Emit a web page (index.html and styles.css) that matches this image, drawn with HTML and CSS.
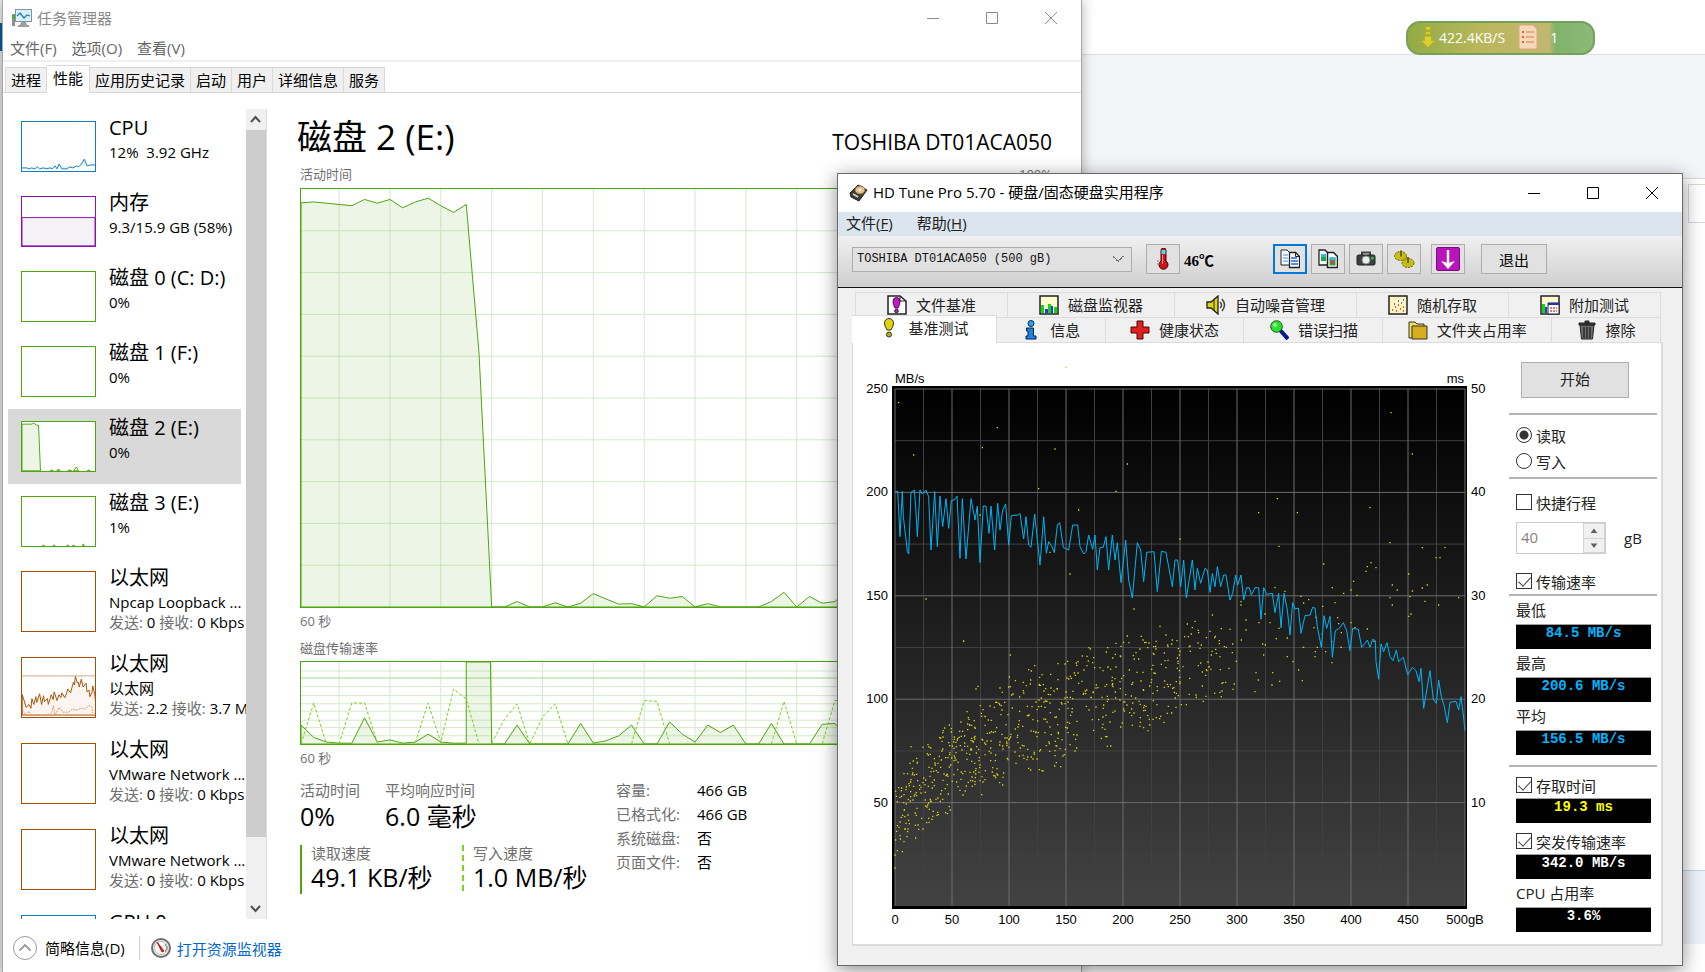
FILE: index.html
```html
<!DOCTYPE html>
<html lang="zh-CN">

<head>
  <meta charset="UTF-8">
  <meta name="viewport" content="width=device-width, initial-scale=1.0">
  <title>任务管理器</title>
  <link rel="stylesheet" href="styles.css">
</head>

<body>

  <div class="backdrop">
    <div class="backdrop-top"></div>
    <div class="backdrop-band"></div>
    <div class="backdrop-body"></div>
    <div class="backdrop-status"></div>
    <div class="backdrop-end"></div>
  </div>
  <div class="backdrop-edge"></div>
  <div class="backdrop-box"></div>

  <!-- network speed widget -->
  <div class="net-widget">
    <svg width="14" height="26" viewBox="0 0 16 26">
      <path d="M5 1h6v4H5zM5 7h6v3H5zM4 12h8v5h4l-8 8-8-8h4z" fill="#dcd02c" stroke="#a8a41c" stroke-width=".6" />
    </svg>
    <span class="net-speed">422.4KB/S</span>
    <svg width="22" height="26" viewBox="0 0 22 26">
      <path d="M2 1h14l4 4v20H2z" fill="#f4d8b8" stroke="#d9a67e" />
      <path d="M5 8h2M5 13h2M5 18h2" stroke="#e0603c" stroke-width="2" />
      <path d="M9 8h8M9 13h8M9 18h8" stroke="#e29a78" stroke-width="1.5" />
    </svg>
    <span class="net-count">1</span>
  </div>

  <!-- task manager -->
  <section class="window taskmgr">
    <header class="tm-title">
      <svg width="20" height="18" viewBox="0 0 20 18">
        <path d="M0 5h3v12H0z" fill="#8b8f92" />
        <path d="M0 6h3v4H0z" fill="#47b13b" />
        <rect x="3.5" y=".5" width="16" height="12" fill="#d8f0fb" stroke="#8a9297" />
        <path d="M5 7l3-3 4 5 3-3 3 1" fill="none" stroke="#1c7fb6" stroke-width="1.3" />
        <path d="M9 13h5l1 3h2v2H6v-2h2z" fill="#9ba0a3" />
      </svg>
      <h1>任务管理器</h1>
      <div class="win-buttons">
        <button type="button" aria-label="最小化"><svg width="12" height="12" viewBox="0 0 12 12"><path d="M0 6.500h12" /></svg></button>
        <button type="button" aria-label="最大化"><svg width="12" height="12" viewBox="0 0 12 12"><path d="M.5.5h11v11H.5z" /></svg></button>
        <button type="button" aria-label="关闭"><svg width="12" height="12" viewBox="0 0 12 12"><path d="M0 0l12 12M12 0L0 12" /></svg></button>
      </div>
    </header>
    <nav class="tm-menu">
      <button type="button">文件(F)</button>
      <button type="button">选项(O)</button>
      <button type="button">查看(V)</button>
    </nav>
    <div class="tm-tabs" role="tablist">
      <button type="button" role="tab">进程</button>
      <button type="button" role="tab" class="active">性能</button>
      <button type="button" role="tab">应用历史记录</button>
      <button type="button" role="tab">启动</button>
      <button type="button" role="tab">用户</button>
      <button type="button" role="tab">详细信息</button>
      <button type="button" role="tab">服务</button>
    </div>

    <div class="tm-body">
      <aside class="tm-side">
        <ul class="device-list">
          <li>
            <svg class="thumb cpu" viewBox="0 0 75 50"><path d="M0 47h5l2 1 3-1 3 1 3-2 2 2 4-1 3 1 4-1 2 1 3-3 2 3 2-5 3 5h5l3-2 3 1 4-2 2 1 3-3 3-5 3 7 3-1h5" /></svg>
            <div class="device">
              <h2>CPU</h2>
              <p>12%&nbsp; 3.92 GHz</p>
            </div>
          </li>
          <li>
            <svg class="thumb mem" viewBox="0 0 75 50"><path d="M0 21h75v29H0z" /></svg>
            <div class="device">
              <h2>内存</h2>
              <p>9.3/15.9 GB (58%)</p>
            </div>
          </li>
          <li>
            <svg class="thumb disk" viewBox="0 0 75 50"></svg>
            <div class="device">
              <h2>磁盘 0 (C: D:)</h2>
              <p>0%</p>
            </div>
          </li>
          <li>
            <svg class="thumb disk" viewBox="0 0 75 50"></svg>
            <div class="device">
              <h2>磁盘 1 (F:)</h2>
              <p>0%</p>
            </div>
          </li>
          <li class="selected">
            <svg class="thumb disk" viewBox="0 0 75 50"><path d="M0 2h10l2-1 3 2 2 0 2 47H0zM29 50l2-1 1 1zM36 50v-1h3v1zM47 50l2-1 2 1zM53 50l3-4 2 4zM67 50l2-1 1 1z" /></svg>
            <div class="device">
              <h2>磁盘 2 (E:)</h2>
              <p>0%</p>
            </div>
          </li>
          <li>
            <svg class="thumb disk" viewBox="0 0 75 50"><path d="M21 50l1-1 1 1zM32 50l1-1 1 1zM46 50l1-1 1 1zM52 50l1-1 1 1zM62 50l1-2 1 2z" /></svg>
            <div class="device">
              <h2>磁盘 3 (E:)</h2>
              <p>1%</p>
            </div>
          </li>
          <li class="net">
            <svg class="thumb eth" viewBox="0 0 75 61"></svg>
            <div class="device">
              <h2>以太网</h2>
              <p>Npcap Loopback ...</p>
              <p><span>发送:</span> 0 <span>接收:</span> 0 Kbps</p>
            </div>
          </li>
          <li class="net">
            <svg class="thumb eth" viewBox="0 0 75 61">
              <path d="M0 38l2 6 2 7 3-3 2 4 1-10 2 6 2-8 1 6 3-9 2 11 2-9 1 6 3-3 1 6 3-10 2 5 1-8 3 9 2-6 2 3 1-5 3 5 2-5 1-4 3 4 1-4 2-7 1 3 1-9 2 7 1-1 1 5 2-8 2 8 3-4 1 9 2-2 1 7 2-4 1-7 2 9 1 8v13H0z" />
              <path class="dash" d="M0 54l4 5 3-4 3 5 4-1h5l4 1 4-2 3 2 2-11 2 10 4-8 4 5h6l4-3 4 1 5-2 4 1 4-4 3 2 1 6" />
              <path class="cap" d="M0 18.500h75" />
            </svg>
            <div class="device">
              <h2>以太网</h2>
              <p>以太网</p>
              <p><span>发送:</span> 2.2 <span>接收:</span> 3.7 Mbps</p>
            </div>
          </li>
          <li class="net">
            <svg class="thumb eth" viewBox="0 0 75 61"></svg>
            <div class="device">
              <h2>以太网</h2>
              <p>VMware Network ...</p>
              <p><span>发送:</span> 0 <span>接收:</span> 0 Kbps</p>
            </div>
          </li>
          <li class="net">
            <svg class="thumb eth" viewBox="0 0 75 61"></svg>
            <div class="device">
              <h2>以太网</h2>
              <p>VMware Network ...</p>
              <p><span>发送:</span> 0 <span>接收:</span> 0 Kbps</p>
            </div>
          </li>
          <li>
            <svg class="thumb cpu" viewBox="0 0 75 50"></svg>
            <div class="device">
              <h2>GPU 0</h2>
            </div>
          </li>
        </ul>
        <div class="scrollbar">
          <svg width="19" height="21" viewBox="0 0 19 21"><path d="M5 13l4.500-5 4.500 5" /></svg>
          <div class="scroll-thumb"></div>
          <svg width="19" height="21" viewBox="0 0 19 21"><path d="M5 8l4.500 5 4.500-5" /></svg>
        </div>
      </aside>

      <main class="tm-main">
        <div class="disk-head">
          <h2>磁盘 2 (E:)</h2>
          <span>TOSHIBA DT01ACA050</span>
        </div>
        <div class="caption"><span>活动时间</span><span>100%</span></div>
        <!-- x runs over 60 samples, y over 0-100% from the top -->
        <svg class="graph graph-active" viewBox="0 0 59 100" preserveAspectRatio="none">
          <path class="grid" d="M3 0v100M7 0v100M11 0v100M15 0v100M19 0v100M23 0v100M27 0v100M31 0v100M35 0v100M39 0v100M43 0v100M47 0v100M51 0v100M55 0v100M0 10h59M0 20h59M0 30h59M0 40h59M0 50h59M0 60h59M0 70h59M0 80h59M0 90h59" />
          <polygon class="area" points="0,100 0,3.300 1,3.100 4,4 5,2.500 6,3.400 7,2.500 8,4.500 9,3.100 10,2.200 11,4 12,5.600 13,3.700 14,39 15,100 16,100 17,98.700 18,100 19,100 20,99 21,100 22,99.100 23,96.800 24,98.100 25,99.300 26,99.200 27,100 28,97.300 29,97.900 30,97.500 31,100 32,99.200 33,100 36,100 37,98.700 38,96.500 39,100 40,97.500 41,99.100 42,98.700 43,96 44,100 59,100" />
        </svg>
        <div class="caption below"><span>60 秒</span></div>
        <div class="caption second"><span>磁盘传输速率</span></div>
        <svg class="graph graph-rate" viewBox="0 0 59 100" preserveAspectRatio="none">
          <path class="grid" d="M3 0v100M7 0v100M11 0v100M15 0v100M19 0v100M23 0v100M27 0v100M31 0v100M35 0v100M39 0v100M43 0v100M47 0v100M51 0v100M55 0v100M0 11h59M0 30h59M0 41h59M0 51h59M0 60h59M0 71h59M0 80h59M0 90h59" />
          <path class="limit" d="M0 19.500h59" />
          <polygon class="area" points="0,100 0,77 1,92 2,97.600 3,99 4,99 5,68 6,97.600 7,95 8,99 9,97.600 10,88 11,97.600 12,99 13,99 13,0 14.900,0 15,100 16,100 17,77 18,100 21,100 22,75 23,99 24,96 25,90 26,77 27,100 28,100 29,73 30,88 31,97.600 32,77 33,86 34,77 35,100 36,100 37,75 38,100 40,100 41,76 42,75 43,90 44,100 59,100" />
          <path class="write" d="M0 100L1 50 2 100M3 100L4 50 5 50 6 98M9 98L10 50 11 98 12 33 13 45 14 100M15 99L16 70 17 51 18 100 19 67 20 51 21 100M26 100L27 47 28 48 29 100M37 100L38 48 39 100M41 100L42 47 43 47" />
        </svg>
        <div class="caption below"><span>60 秒</span></div>

        <div class="stats">
          <div class="stats-live">
            <div class="stats-row">
              <dl><dt>活动时间</dt><dd>0%</dd></dl>
              <dl><dt>平均响应时间</dt><dd>6.0 毫秒</dd></dl>
            </div>
            <div class="stats-row">
              <dl class="read"><dt>读取速度</dt><dd>49.1 KB/秒</dd></dl>
              <dl class="write"><dt>写入速度</dt><dd>1.0 MB/秒</dd></dl>
            </div>
          </div>
          <table class="stats-info">
            <tr><th>容量:</th><td>466 GB</td></tr>
            <tr><th>已格式化:</th><td>466 GB</td></tr>
            <tr><th>系统磁盘:</th><td>否</td></tr>
            <tr><th>页面文件:</th><td>否</td></tr>
          </table>
        </div>
      </main>
    </div>

    <footer class="tm-footer">
      <button type="button">
        <svg width="24" height="24" viewBox="0 0 24 24"><circle cx="12" cy="12" r="11.500" fill="none" stroke="#999" /><path d="M6.500 14.500L12 9l5.500 5.500" fill="none" stroke="#999" stroke-width="1.800" /></svg>
        简略信息(D)
      </button>
      <a href="#">
        <svg width="20" height="20" viewBox="0 0 20 20">
          <circle cx="10" cy="10" r="9" fill="#f2f2f2" stroke="#6d6d6d" stroke-width="2" />
          <circle cx="10" cy="10" r="6.500" fill="#fff" stroke="#b5b5b5" />
          <path d="M6 4l7 9-2 1z" fill="#d5281f" stroke="#b01712" />
          <path d="M14 6l2 4-2 4" fill="none" stroke="#777" />
        </svg>
        打开资源监视器
      </a>
    </footer>
  </section>

  <!-- HD Tune -->
  <section class="window hdtune">
    <header class="hd-title">
      <svg width="19" height="18" viewBox="0 0 19 18">
        <path d="M1 9L9 1l9 5-8 11-8-4z" fill="#3d3a38" stroke="#222" />
        <ellipse cx="11" cy="6" rx="5" ry="4" fill="#e8c28c" stroke="#8d6a3e" />
        <circle cx="11" cy="6" r="1.300" fill="#fff" />
        <path d="M4 10l5 3" stroke="#d8d0c8" stroke-width="2" />
      </svg>
      <h1>HD Tune Pro 5.70 - 硬盘/固态硬盘实用程序</h1>
      <div class="win-buttons">
        <button type="button" aria-label="最小化"><svg width="12" height="12" viewBox="0 0 12 12"><path d="M0 6.500h12" /></svg></button>
        <button type="button" aria-label="最大化"><svg width="12" height="12" viewBox="0 0 12 12"><path d="M.5.5h11v11H.5z" /></svg></button>
        <button type="button" aria-label="关闭"><svg width="12" height="12" viewBox="0 0 12 12"><path d="M0 0l12 12M12 0L0 12" /></svg></button>
      </div>
    </header>
    <nav class="hd-menu">
      <button type="button">文件(<u>F</u>)</button>
      <button type="button">帮助(<u>H</u>)</button>
    </nav>
    <div class="hd-toolbar">
      <select class="drive" aria-label="硬盘">
        <option>TOSHIBA DT01ACA050 (500 gB)</option>
      </select>
      <button type="button" class="tool temp" aria-label="温度">
        <svg width="20" height="22" viewBox="0 0 20 22">
          <path d="M8 2.500a2.500 2.500 0 0 1 5 0V13a4.500 4.500 0 1 1-5 0z" fill="#d8101a" stroke="#3a0505" />
          <path d="M8.500 2h4v4h-4z" fill="#4fd8e8" />
          <path d="M9.500 7v9" stroke="#ff8d8d" />
          <path d="M4 16h3M4 13h2" stroke="#777" />
        </svg>
      </button>
      <strong class="temp-value">46℃</strong>
      <button type="button" class="tool focused" aria-label="复制文本">
        <svg width="20" height="20" viewBox="0 0 20 20">
          <path d="M1 1h6l3 3v12H1z" fill="#fff" stroke="#222" />
          <path d="M3 6h5M3 9h5M3 12h5" stroke="#3a8fe8" />
          <path d="M9.500 3.500h6l4 4v11h-10z" fill="#fff" stroke="#222" stroke-width="1.300" />
          <path d="M15.500 3.500v4h4" fill="none" stroke="#222" />
          <path d="M11 9h6M11 12h7M11 15h7" stroke="#2468d8" stroke-width="1.300" />
        </svg>
      </button>
      <button type="button" class="tool" aria-label="复制图像">
        <svg width="20" height="20" viewBox="0 0 20 20">
          <path d="M1 1h6l3 3v12H1z" fill="#fff" stroke="#222" stroke-width="1.300" />
          <path d="M3 5h5v7H3z" fill="#1fa83c" />
          <path d="M3 5h5v3H3z" fill="#35b5e8" />
          <path d="M9.500 3.500h6l4 4v11h-10z" fill="#fff" stroke="#222" stroke-width="1.500" />
          <path d="M11.500 8.500h6v8h-6z" fill="#1fa83c" />
          <path d="M11.500 8.500h6v3h-6z" fill="#35b5e8" />
          <circle cx="14.500" cy="13" r="2" fill="#d6442c" />
        </svg>
      </button>
      <button type="button" class="tool" aria-label="截图">
        <svg width="20" height="20" viewBox="0 0 20 20">
          <path d="M6 6V3.500h8V6" fill="none" stroke="#444" stroke-width="2" />
          <rect x="1" y="6" width="18" height="10" rx="1.500" fill="#3c3f41" stroke="#222" />
          <circle cx="10" cy="11" r="4" fill="#e9eef0" stroke="#888" />
          <circle cx="16.500" cy="9" r="1.500" fill="#25c93a" />
        </svg>
      </button>
      <button type="button" class="tool" aria-label="选项">
        <svg width="22" height="20" viewBox="0 0 22 20">
          <ellipse cx="7.500" cy="7" rx="6" ry="4.500" fill="#c9bd14" stroke="#6d660b" stroke-dasharray="2 1" />
          <ellipse cx="15" cy="14" rx="6" ry="4.500" fill="#c9bd14" stroke="#6d660b" stroke-dasharray="2 1" />
          <path d="M8 1.500v6M15 8v6" stroke="#6d660b" stroke-width="2" />
        </svg>
      </button>
      <button type="button" class="tool save" aria-label="保存">
        <svg width="24" height="24" viewBox="0 0 24 24">
          <rect x=".5" y=".5" width="23" height="23" rx="1.500" fill="#b914b9" stroke="#7c0a80" />
          <path d="M12 3v14" stroke="#fff" stroke-width="2.500" />
          <path d="M5 14l7 2 7-2-7 8z" fill="#fff" />
        </svg>
      </button>
      <button type="button" class="exit">退出</button>
    </div>

    <div class="hd-body">
      <div class="hd-tabs back" role="tablist">
        <button type="button" role="tab">
          <svg viewBox="0 0 20 20"><path d="M1 1h12l6 5v13H1z" fill="#fff" stroke="#222" stroke-width="1.500" /><path d="M13 1v5h6" fill="none" stroke="#222" /><path d="M6 6.500a3.500 4 0 0 1 7 0Q13 9 11 13H8Q6 9 6 6.500z" fill="#c816c8" stroke="#4a064a" /><circle cx="9.500" cy="16" r="1.800" fill="#c816c8" stroke="#222" /></svg>
          文件基准
        </button>
        <button type="button" role="tab">
          <svg viewBox="0 0 20 20"><path d="M1 1h18v18H1z" fill="#fbfbd0" stroke="#222" stroke-width="1.500" /><path d="M2 18v-8h3v8zM9 18v-9h3v9zM15 18v-6h3v6z" fill="#12d612" /><path d="M6 18v-4h3v4zM12 18v-7h2v7z" fill="#2438e0" /></svg>
          磁盘监视器
        </button>
        <button type="button" role="tab">
          <svg viewBox="0 0 20 20"><path d="M1 7h4l7-6v18l-7-6H1z" fill="#ded50f" stroke="#222" stroke-width="1.300" /><path d="M8 5v10" stroke="#222" /><path d="M14 7q3 3 0 6M16 4q5 6 0 12" fill="none" stroke="#444" stroke-width="1.500" /></svg>
          自动噪音管理
        </button>
        <button type="button" role="tab">
          <svg viewBox="0 0 20 20"><path d="M1 1h18v18H1z" fill="#fdf5c0" stroke="#222" stroke-width="1.500" /><path d="M4 15h1M7 12h1M8 16h1M10 10h1M12 14h1M15 12h1M15 16h1" stroke="#e02424" stroke-width="1.500" /><path d="M6 9h1M10 6h1M13 8h1M15 5h1" stroke="#2a3be0" stroke-width="1.500" /></svg>
          随机存取
        </button>
        <button type="button" role="tab">
          <svg viewBox="0 0 20 20"><path d="M1 1h18v18H1z" fill="#fbfbd0" stroke="#222" stroke-width="1.500" /><path d="M2 18V9h3v9z" fill="#12d612" /><path d="M5 18v-6h2v6z" fill="#2438e0" /><path d="M8 8h11v11H8z" fill="#fff" stroke="#222" /><path d="M8 8h11v2H8z" fill="#1c2fd0" /><path d="M10 13h7M10 16h7" stroke="#e04848" stroke-width="1.500" stroke-dasharray="2 1" /></svg>
          附加测试
        </button>
      </div>
      <div class="hd-tabs front" role="tablist">
        <button type="button" role="tab" class="active">
          <svg viewBox="0 0 20 20"><path d="M5.500 5a4.500 4.500 0 0 1 9 0q0 3-2.500 7H8Q5.500 8 5.500 5z" fill="#ded50f" stroke="#333" /><circle cx="10" cy="16.500" r="2.500" fill="#b8ae10" stroke="#333" /></svg>
          基准测试
        </button>
        <button type="button" role="tab">
          <svg viewBox="0 0 20 20"><circle cx="10" cy="3.500" r="3" fill="#1fa8f0" stroke="#0a2a50" /><path d="M5.500 8h7v8H15v3H5v-3h2v-5H5.500z" fill="#1785e8" stroke="#0a2040" /></svg>
          信息
        </button>
        <button type="button" role="tab">
          <svg viewBox="0 0 20 20"><path d="M7 1h6v6h6v6h-6v6H7v-6H1V7h6z" fill="#e01f1f" stroke="#4d0808" /></svg>
          健康状态
        </button>
        <button type="button" role="tab">
          <svg viewBox="0 0 20 20"><path d="M11 10l8 9" stroke="#0a1690" stroke-width="4" /><circle cx="7.500" cy="6.500" r="5.800" fill="#2ee02e" stroke="#145c14" /><circle cx="6" cy="5" r="2" fill="#a4f7a4" /></svg>
          错误扫描
        </button>
        <button type="button" role="tab">
          <svg viewBox="0 0 20 20"><path d="M1 18V2h6l2 2h7v14z" fill="#f0dc5a" stroke="#333" /><path d="M4 6h15v13H4z" fill="#d9ae1c" stroke="#333" /></svg>
          文件夹占用率
        </button>
        <button type="button" role="tab">
          <svg viewBox="0 0 20 20"><path d="M3 5h14l-1.500 14h-11z" fill="#6c6f70" stroke="#222" /><path d="M7 7v11M10 7v11M13 7v11" stroke="#1d1d1d" stroke-width="1.300" /><path d="M2 3h16v2H2zM8 1h4v2H8z" fill="#3b3d3e" stroke="#222" /></svg>
          擦除
        </button>
      </div>

      <div class="hd-panel">
        <div class="bench">
          <div class="units"><span>MB/s</span><span>ms</span></div>
          <div class="axis axis-left"><span>250</span><span>200</span><span>150</span><span>100</span><span>50</span></div>
          <svg class="plot" viewBox="126 78 1725 1569" preserveAspectRatio="none">
            <defs>
              <linearGradient id="plotBg" x1="0" y1="0" x2="0" y2="1">
                <stop offset="0" stop-color="#000" />
                <stop offset="1" stop-color="#424242" />
              </linearGradient>
            </defs>
            <rect x="126" y="78" width="1725" height="1569" fill="#000" />
            <rect x="135" y="87" width="1710" height="1551" fill="url(#plotBg)" />
            <path id="minorGrid" class="minor" />
            <path id="majorGrid" class="major" />
            <path id="accessDots" class="dots" />
            <polyline class="speed" points="135,394 143,394 145,430 150,530 157,394 160,470 167,530 172,575 176,582 183,397 193,390 197,440 202,530 210,390 217,402 228,390 236,410 243,570 254,395 262,560 270,408 278,500 288,416 296,505 304,422 312,420 321,408 330,595 337,416 348,597 363,416 375,480 382,438 390,608 400,438 408,438 417,520 423,438 434,570 443,430 450,510 458,450 467,432 476,555 484,467 505,465 510,460 521,537 528,470 536,555 543,562 554,462 570,615 581,470 589,580 596,545 606,560 613,578 622,495 629,488 640,562 656,570 668,495 683,495 690,560 701,582 708,575 716,525 728,568 735,525 742,630 750,562 760,562 768,530 776,630 787,525 795,600 802,548 813,668 827,540 836,660 847,714 862,548 872,570 881,665 890,577 912,575 922,695 934,574 948,577 967,680 975,600 983,600 992,680 1001,600 1009,714 1027,600 1035,690 1042,625 1052,670 1065,625 1072,630 1080,697 1087,640 1095,680 1102,620 1112,680 1121,645 1128,645 1140,720 1148,700 1157,645 1163,675 1173,645 1181,720 1190,683 1198,683 1204,705 1215,683 1226,683 1233,778 1241,683 1250,703 1267,700 1275,758 1286,700 1293,803 1302,700 1312,750 1320,825 1328,728 1335,747 1345,744 1353,820 1365,767 1380,765 1388,742 1395,744 1402,800 1414,862 1422,767 1430,805 1440,770 1447,892 1456,812 1468,805 1480,788 1490,812 1500,872 1508,805 1525,808 1535,862 1545,850 1552,840 1560,862 1568,838 1576,842 1578,905 1586,958 1593,852 1601,875 1611,848 1620,890 1629,902 1639,870 1646,905 1660,892 1673,945 1687,922 1698,932 1707,965 1713,925 1721,1045 1740,932 1750,1018 1759,1030 1766,960 1774,1010 1783,1040 1792,1088 1800,1027 1818,1024 1826,1050 1833,1010 1840,1065 1845,1112" />
          </svg>
          <div class="axis axis-right"><span>50</span><span>40</span><span>30</span><span>20</span><span>10</span></div>
          <div class="axis-bottom"><span>0</span><span>50</span><span>100</span><span>150</span><span>200</span><span>250</span><span>300</span><span>350</span><span>400</span><span>450</span><span>500gB</span></div>
        </div>

        <form class="controls">
          <button type="button" class="start">开始</button>
          <hr>
          <div class="modes">
            <label><input type="radio" name="mode" checked>读取</label>
            <label><input type="radio" name="mode">写入</label>
          </div>
          <hr>
          <label class="stroke-check"><input type="checkbox">快捷行程</label>
          <div class="stroke-size">
            <span class="spinner">
              <input type="text" value="40" aria-label="快捷行程" disabled>
              <span class="arrows">
                <svg viewBox="0 0 18 12"><path d="M6 8l3-4 3 4z" /></svg>
                <svg viewBox="0 0 18 12"><path d="M6 4l3 4 3-4z" /></svg>
              </span>
            </span>
            gB
          </div>
          <label class="rate-check"><input type="checkbox" checked>传输速率</label>
          <hr>
          <p>最低</p>
          <output>84.5 MB/s</output>
          <p>最高</p>
          <output>200.6 MB/s</output>
          <p>平均</p>
          <output>156.5 MB/s</output>
          <hr class="spaced">
          <label class="result-check"><input type="checkbox" checked>存取时间</label>
          <output class="yellow">19.3 ms</output>
          <label class="result-check"><input type="checkbox" checked>突发传输速率</label>
          <output class="white">342.0 MB/s</output>
          <p>CPU 占用率</p>
          <output class="white">3.6%</output>
        </form>
      </div>
    </div>
  </section>

  <script src="script.js"></script>
</body>

</html>
```

FILE: styles.css
```css
* {
  box-sizing: border-box;
}

body {
  margin: 0;
  height: 100vh;
  position: relative;
  overflow: hidden;
  background: #fff;
  color: #000;
  font-family: "Open Sans", "Noto Sans CJK SC", sans-serif;
  font-size: 15px;
}

h1,
h2,
p,
ul,
dl,
dd {
  margin: 0;
  padding: 0;
  font-weight: normal;
}

button {
  margin: 0;
  padding: 0;
  border: 0;
  background: none;
  color: inherit;
  font: inherit;
}

/* desktop behind the windows */
.backdrop {
  display: flex;
  flex-direction: column;
  height: 100%;
}

.backdrop-top {
  height: 55px;
  border-bottom: 1px solid #dcdfe3;
}

.backdrop-band {
  height: 124px;
  background: #f3f5f8;
  border-bottom: 1px solid #d6d9dc;
}

.backdrop-body {
  flex: 1;
}

.backdrop-status {
  height: 74px;
  background: #eef3fb;
  border-top: 1px solid #c3d3e6;
}

.backdrop-end {
  height: 28px;
}

.backdrop-edge {
  position: absolute;
  left: 0;
  top: 0;
  width: 3px;
  height: 100%;
  background: linear-gradient(#eee 23px, #0a5aa8 23px, #0a5aa8 51px, #e4e4e4 51px);
}

.backdrop-box {
  position: absolute;
  top: 184px;
  right: 0;
  width: 17px;
  height: 39px;
  border: 1px solid #d6d9dc;
  border-right: 0;
  background: #fff;
}

.net-widget {
  position: absolute;
  top: 21px;
  left: 1406px;
  width: 189px;
  height: 34px;
  display: flex;
  align-items: center;
  padding: 0 0 2px 13px;
  border: 2px solid #74a05a;
  border-radius: 14px;
  background: linear-gradient(90deg, #93ab45, #b9b75c 40%, #c2b770 76%, #7fb36c 80%, #8cba78);
  color: #fff;
  font-size: 14px;
}

.net-speed {
  margin: 0 12px 0 4px;
}

.net-count {
  margin-left: 11px;
}

/* shared window parts */
.window {
  position: absolute;
  display: flex;
  flex-direction: column;
}

.win-buttons {
  display: flex;
  margin-left: auto;
  padding-right: 1px;
}

.win-buttons button {
  width: 59px;
  height: 36px;
  display: flex;
  align-items: center;
  justify-content: center;
}

.win-buttons path {
  fill: none;
  stroke: currentColor;
}

/* task manager */
.taskmgr {
  top: 0;
  left: 2px;
  width: 1080px;
  min-height: 100vh;
  border: 1px solid #a8a8a8;
  border-width: 0 1px;
  background: #fff;
  box-shadow: 0 0 12px rgba(0, 0, 0, .3);
}

.tm-title {
  display: flex;
  align-items: center;
  height: 37px;
  padding: 0 0 2px 9px;
  color: #8a8a8a;
}

.tm-title h1 {
  margin-left: 5px;
  font-size: 15px;
}

.tm-menu {
  display: flex;
  gap: 15px;
  height: 27px;
  margin-top: -2px;
  padding-left: 7px;
  border-bottom: 2px solid #f0f0f0;
  color: #666;
}

.tm-tabs {
  display: flex;
  align-items: flex-end;
  height: 31px;
  padding-left: 2px;
  border-bottom: 1px solid #d9d9d9;
}

.tm-tabs button {
  height: 25px;
  padding: 0 5px 1px;
  border: 1px solid #d9d9d9;
  border-width: 1px 1px 0 0;
  background: #f0f0f0;
}

.tm-tabs button:first-child {
  border-left-width: 1px;
}

.tm-tabs .active {
  height: 28px;
  margin-bottom: -1px;
  padding: 0 6px 4px;
  background: #fff;
}

.tm-body {
  display: flex;
  padding-top: 16px;
}

.tm-side {
  display: flex;
  width: 264px;
  height: 810px;
  padding-left: 5px;
  border-right: 1px solid #dcdcdc;
}

.device-list {
  flex: 1;
  overflow: hidden;
  list-style: none;
}

.device-list li {
  display: flex;
  height: 75px;
  margin-right: 5px;
  padding: 7px 0 0 13px;
  white-space: nowrap;
}

.device-list .net {
  height: 86px;
}

.device-list .selected {
  background: #d9d9d9;
}

.thumb {
  flex: none;
  width: 75px;
  height: 51px;
  margin: 5px 13px 0 0;
  border: 1px solid;
  background: #fff;
}

.net .thumb {
  height: 61px;
}

.thumb path {
  stroke: currentColor;
  fill: currentColor;
  fill-opacity: .1;
}

.cpu {
  color: #117dbb;
}

.mem {
  color: #8b12ae;
}

.mem path {
  fill: #f4f2f4;
  fill-opacity: 1;
}

.disk {
  color: #4da60c;
}

.eth {
  color: #a74f01;
}

.thumb.eth path {
  fill-opacity: .06;
}

.thumb.eth .dash {
  fill: none;
  stroke: #e8926a;
  stroke-dasharray: 2 1;
}

.thumb.eth .cap {
  stroke: #cfa584;
}

.device h2 {
  margin-bottom: 2px;
  font-size: 20px;
  line-height: 24px;
}

.device p {
  line-height: 20px;
}

.device span {
  color: #707070;
}

.scrollbar {
  display: flex;
  flex-direction: column;
  width: 20px;
  background: #f0f0f0;
}

.scrollbar path {
  fill: none;
  stroke: #505050;
  stroke-width: 2;
}

.scroll-thumb {
  height: 707px;
  margin-bottom: auto;
  background: #cdcdcd;
}

.tm-main {
  flex: 1;
  padding: 4px 29px 0 33px;
}

.disk-head {
  display: flex;
  align-items: baseline;
  justify-content: space-between;
  height: 52px;
  margin-left: -3px;
}

.disk-head h2 {
  font-size: 35px;
  line-height: 48px;
}

.disk-head span {
  font-size: 21px;
}

.caption {
  display: flex;
  justify-content: space-between;
  height: 23px;
  color: #707070;
  font-size: 13px;
  line-height: 18px;
}

.below {
  padding-top: 4px;
}

.second {
  height: 22px;
  margin-top: 8px;
}

.graph {
  display: block;
  width: 100%;
  height: 420px;
  border: 1px solid #4da60c;
}

.graph-rate {
  height: 84px;
}

.graph > * {
  fill: none;
  stroke-width: 1px;
  vector-effect: non-scaling-stroke;
}

.graph .grid {
  stroke: #d5eaca;
}

.graph .limit {
  stroke: #a3d98c;
}

.graph .area {
  fill: rgba(77, 166, 12, .1);
  stroke: #4da60c;
}

.graph .write {
  stroke: #7ecc1e;
  stroke-dasharray: 3 2;
}

.stats {
  display: flex;
  padding-top: 12px;
}

.stats-live {
  width: 316px;
}

.stats-row {
  display: flex;
  height: 65px;
}

.stats dl:first-child {
  padding-right: 25px;
}

.stats dt {
  color: #707070;
  line-height: 20px;
}

.stats dd {
  font-size: 25px;
  line-height: 32px;
}

.stats .read {
  width: 162px;
  height: 49px;
  padding-left: 9px;
  border-left: 2px solid #4da60c;
  white-space: nowrap;
}

.stats .write {
  height: 46px;
  padding-left: 9px;
  border-left: 2px dashed #7ed321;
}

.stats .read dt,
.stats .write dt {
  line-height: 16px;
}

.stats-info {
  height: 96px;
  border-spacing: 0;
}

.stats-info th,
.stats-info td {
  height: 24px;
  padding: 0;
  font-weight: normal;
  line-height: 20px;
  text-align: left;
  vertical-align: top;
}

.stats-info th {
  width: 81px;
  color: #707070;
}

.tm-footer {
  display: flex;
  align-items: center;
  height: 50px;
  margin-top: 4px;
  padding-left: 10px;
}

.tm-footer button,
.tm-footer a {
  display: flex;
  align-items: center;
}

.tm-footer button {
  gap: 8px;
  padding-right: 14px;
  border-right: 1px solid #d0d0d0;
  line-height: 16px;
}

.tm-footer a {
  gap: 6px;
  margin-left: 11px;
  color: #0066cc;
  text-decoration: none;
}

/* HD Tune */
.hdtune {
  top: 173px;
  left: 837px;
  right: 22px;
  border: 1px solid #6b6b6b;
  background: #f0f0f0;
  box-shadow: 0 4px 18px rgba(0, 0, 0, .45);
}

.hd-title {
  display: flex;
  align-items: center;
  height: 38px;
  padding-left: 11px;
  background: #fff;
}

.hd-title h1 {
  margin: 0 0 3px 5px;
  font-size: 15px;
}

.hd-menu {
  display: flex;
  gap: 24px;
  height: 24px;
  padding: 0 0 3px 8px;
  background: #dce4ed;
  color: #222;
}

.hd-toolbar {
  display: flex;
  align-items: center;
  height: 52px;
  padding: 0 14px 5px;
  border-bottom: 1px solid #111;
  background: linear-gradient(#f0f0f0, #cfcfcf);
}

.drive {
  width: 280px;
  height: 25px;
  margin-right: 14px;
  padding: 0 4px;
  border: 1px solid #adadad;
  border-radius: 0;
  appearance: none;
  background: linear-gradient(45deg, transparent 50%, #707070 50%, #707070 62%, transparent 62%) 259px 8px / 6px 6px no-repeat,
    linear-gradient(-45deg, transparent 50%, #707070 50%, #707070 62%, transparent 62%) 265px 8px / 6px 6px no-repeat,
    #e1e1e1;
  color: #111;
  font-family: "Liberation Mono", monospace;
  font-size: 12px;
}

.tool,
.exit,
.start {
  display: flex;
  align-items: center;
  justify-content: center;
  border: 1px solid #adadad;
  background: #e1e1e1;
}

.tool {
  width: 34px;
  height: 30px;
  margin-right: 4px;
}

.temp-value {
  margin-right: auto;
  font-family: "Liberation Serif", "Noto Sans CJK SC", serif;
  font-size: 15px;
}

.focused {
  border: 2px solid #0078d7;
}

.save {
  margin: 0 16px 0 6px;
}

.exit {
  width: 66px;
  height: 30px;
  margin-right: 121px;
}

.hd-body {
  padding: 4px 19px 19px 14px;
}

.hd-tabs {
  display: flex;
  margin-right: 2px;
}

.hd-tabs.back {
  padding-left: 3px;
}

.hd-tabs button {
  flex: 1 1 auto;
  display: flex;
  align-items: center;
  justify-content: center;
  gap: 9px;
  height: 25px;
  border: 1px solid #dcdcdc;
  border-width: 1px 1px 0 0;
  line-height: 20px;
  color: #222;
}

.hd-tabs.back button:first-child {
  border-left-width: 1px;
}

.hd-tabs svg {
  width: 20px;
  height: 20px;
}

.hd-tabs .active {
  height: 28px;
  margin: -2px 0 -1px;
  padding: 0 3px 3px;
  background: #fff;
  position: relative;
}

.hd-panel {
  display: flex;
  padding: 0 4px 12px 0;
  border: 1px solid #dcdcdc;
  border-width: 1px 2px 2px 1px;
  background: #fff;
}

.bench {
  flex: 1;
  display: grid;
  grid-template-columns: 39px 1fr 42px;
  align-content: start;
  padding-top: 29px;
  font-family: "Liberation Sans", sans-serif;
  font-size: 13px;
  line-height: 14px;
}

.units {
  grid-column: 2;
  display: flex;
  justify-content: space-between;
  padding: 0 3px;
}

.axis {
  grid-row: 2;
  display: flex;
  flex-direction: column;
  height: 517px;
  margin-top: -4px;
}

.axis span {
  flex: 1;
}

.axis-left {
  grid-column: 1;
  padding-right: 4px;
  text-align: right;
}

.axis-right {
  grid-column: 3;
  padding-left: 4px;
}

.axis-bottom {
  grid-column: 2;
  display: flex;
  justify-content: space-between;
  padding: 4px 2px 0 3px;
}

.axis-bottom span {
  width: 0;
  display: flex;
  justify-content: center;
}

.plot {
  grid-column: 2;
  grid-row: 2;
  display: block;
  width: 100%;
  height: 523px;
  overflow: visible;
}

.plot path,
.plot polyline {
  fill: none;
  vector-effect: non-scaling-stroke;
}

.plot .minor {
  stroke: #404040;
}

.plot .major {
  stroke: #6c6c6c;
}

.plot .dots {
  fill: #d8d210;
}

.plot .speed {
  stroke: #00b4f5;
  stroke-width: 1px;
}

.controls {
  width: 148px;
  padding-top: 19px;
  color: #222;
}

.controls .start {
  width: 108px;
  height: 36px;
  margin: 0 0 15px 12px;
  padding-bottom: 3px;
}

.controls hr {
  height: 2px;
  margin: 0;
  border: 0;
  background: #b4b4b4;
}

.controls label {
  display: flex;
  align-items: center;
  height: 26px;
  padding-left: 7px;
}

.controls input[type="radio"],
.controls input[type="checkbox"] {
  width: 16px;
  height: 16px;
  margin: 0 4px 0 0;
  appearance: none;
  border: 1px solid #333;
  background: #fff;
}

.controls input[type="radio"] {
  border-radius: 50%;
}

.controls input[type="radio"]:checked {
  background: radial-gradient(#333 4px, #fff 5px);
}

.controls input[type="checkbox"]:checked {
  position: relative;
}

.controls input[type="checkbox"]:checked::after {
  content: "";
  position: absolute;
  left: 4px;
  top: 0;
  width: 6px;
  height: 11px;
  border: solid #444;
  border-width: 0 1px 1px 0;
  transform: rotate(42deg);
}

.modes {
  padding: 7px 0 3px;
}

.controls .stroke-check {
  margin: 10px 0 7px;
}

.stroke-size {
  display: flex;
  align-items: center;
  gap: 18px;
  padding-left: 7px;
}

.spinner {
  display: flex;
  width: 90px;
  height: 32px;
  border: 1px solid #ccc;
}

.spinner input {
  flex: 1;
  min-width: 0;
  padding: 0 4px 3px;
  border: 0;
  background: #fff;
  color: #838383;
  font: inherit;
}

.arrows {
  display: flex;
  flex-direction: column;
  gap: 1px;
  width: 22px;
  padding: 1px;
  background: #d4d4d8;
}

.arrows svg {
  flex: 1;
  min-height: 0;
  background: #f0f0f0;
  fill: #606060;
}

.controls .rate-check {
  margin-top: 14px;
}

.controls p {
  height: 20px;
  margin: 4px 0 4px 7px;
  line-height: 20px;
}

.controls output {
  display: block;
  width: 135px;
  height: 25px;
  margin-left: 7px;
  border-top: 1px solid #a0a0a0;
  background: #000;
  color: #00b4ff;
  font: bold 14px/17px "Liberation Mono", monospace;
  text-align: center;
}

.controls .spaced {
  margin: 10px 0 4px;
}

.controls .result-check {
  margin-top: 5px;
}

.controls .yellow {
  color: #ff0;
}

.controls .white {
  color: #fff;
}
```

FILE: script.js
```javascript
// plot area inside the chart's viewBox
const left = 135;
const right = 1845;
const top0 = 87;
const bottom = 1638;

let major = '';
let minor = '';
for (let i = 0; i <= 20; i++) {
  const x = left + (right - left) * i / 20;
  const line = `M${x} ${top0}V${bottom}`;
  if (i % 2) { minor += line; } else { major += line; }
}
for (let i = 0; i < 10; i++) {
  const y = top0 + (bottom - top0) * i / 10;
  const line = `M${left} ${y}H${right}`;
  if (i % 2) { minor += line; } else { major += line; }
}
document.getElementById('majorGrid').setAttribute('d', major);
document.getElementById('minorGrid').setAttribute('d', minor);

// single slow accesses, as x,y pairs
const slow = [
  648,22, 146,128, 442,203, 397,263, 191,285, 615,267, 832,312, 566,386, 798,394, 686,450, 390,465,
  990,537, 600,577, 660,642, 228,717, 341,844, 852,747, 930,799, 948,825, 1012,792, 813,859, 837,848,
  884,848, 918,844, 967,840, 965,852, 911,860, 870,867, 1623,158, 1687,282, 1282,416, 1226,458,
  1342,458, 1560,443, 1287,559, 1620,548, 1717,563, 1785,563, 1758,593, 1770,593, 1421,612, 1563,608,
  1552,620, 1548,634, 1578,623, 1676,642, 1511,664, 1447,683, 1503,690, 1481,700, 1521,706, 1627,675,
  1642,690, 1732,675, 1717,684, 1687,693, 1680,710, 1620,713, 1725,724, 1766,735, 1826,713, 1627,735,
  1683,762, 1676,769, 1275,683, 1305,694, 1353,709, 1376,719, 1361,729, 1418,739, 1455,728, 1087,765,
  1173,725, 1173,735, 1245,762, 1188,780, 1227,788, 1260,788, 1012,792, 1035,784, 1027,803, 1024,822,
  1046,818, 1080,814, 1069,833, 1114,806, 1140,808, 1188,810, 1174,840, 1054,855, 1018,860, 1123,860,
  1148,852, 1238,852, 1279,836, 1287,805, 1312,834, 1360,862, 1392,803, 1398,772, 1417,822, 1440,772,
  1463,773, 1466,791, 1474,818, 1474,862, 1503,788, 1515,803, 1552,807, 1572,844, 1445,844, 1402,862,
  1268,938, 1266,975, 1289,964, 1357,962, 1346,930, 1312,890, 1329,905, 1361,862, 1395,890, 1396,875,
  1446,908, 1427,875, 1473,862, 1246,855, 1241,885, 1218,938, 1225,960, 1215,995, 384,979, 341,843,
  183,1160, 219,1162, 135,1485, 135,1524, 142,1472, 157,1475, 378,987, 481,885
];

// access time band (ms) and number of samples for every 50 gB
const low = [5, 9, 11, 13.5, 15.5, 18, 20];
const high = [12.5, 18.5, 22.5, 25.5, 26.5, 27, 27];
const count = [165, 160, 130, 110, 105, 50];

let seed = 46;
function rand() {
  seed = (seed * 16807) % 2147483647;
  return seed / 2147483647;
}

let dots = '';
function dot(x, y) {
  dots += `M${x} ${y}h4v4h-4z`;
}

for (let i = 0; i < slow.length; i += 2) {
  dot(slow[i] - 2, slow[i + 1] - 2);
}
count.forEach((n, i) => {
  for (let k = 0; k < n; k++) {
    const f = rand();
    const lo = low[i] + (low[i + 1] - low[i]) * f;
    const hi = high[i] + (high[i + 1] - high[i]) * f;
    const ms = lo + (hi - lo) * (rand() * 0.8 + rand() * 0.2);
    dot(Math.round(left + (i + f) * 171), Math.round(bottom - ms * 31.02));
  }
});
document.getElementById('accessDots').setAttribute('d', dots);
```
